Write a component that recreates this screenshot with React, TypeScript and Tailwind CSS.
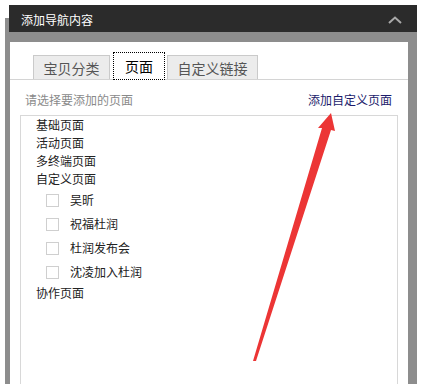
import React from "react";

const font = { fontFamily: '"Noto Sans CJK SC", "Liberation Sans", sans-serif' };

function Check({ label }: { label: string }) {
  return (
    <div className="h-[24px] flex items-center">
      <div className="ml-[10px] w-[13px] h-[13px] border border-[#cfcfcf] bg-white" />
      <span className="ml-[11px] text-[12px] leading-[16px] text-[#222]">{label}</span>
    </div>
  );
}

function Item({ label }: { label: string }) {
  return <div className="h-[18px] flex items-center text-[12px] leading-[16px] text-[#222]">{label}</div>;
}

export default function App() {
  return (
    <div className="relative w-[424px] h-[384px] bg-white overflow-hidden" style={font}>
      {/* header */}
      <div className="mt-[5px] ml-[5px] w-[412px] h-[27px] flex">
        <div className="w-[4px] flex flex-col">
          <div className="h-[13px] bg-white" />
          <div className="flex-1 bg-[#8d8d8d]" />
        </div>
        <div className="flex-1 bg-[#2b2b2b] flex items-center justify-between pl-[12px] pr-[15px]">
          <span className="text-[12px] leading-[16px] text-white mt-[3px]">添加导航内容</span>
          <svg width="14" height="8" viewBox="0 0 14 8" className="mt-[3px]">
            <path d="M1 7 L7 1.5 L13 7" fill="none" stroke="#a9a9a9" strokeWidth="2" />
          </svg>
        </div>
      </div>
      {/* body */}
      <div className="ml-[5px] w-[412px] h-[352px] bg-[#8d8d8d] pt-[10px] pl-[5px] pr-[9px]">
        <div className="bg-white h-full flex flex-col">
          {/* tabs */}
          <div className="h-[38px] border-b border-[#d4d4d4] flex items-end pl-[23px]">
            <div className="w-[77px] h-[24px] bg-[#ececec] border border-b-0 border-[#cacaca] flex items-center justify-center text-[14px] leading-[18px] text-[#555]">
              宝贝分类
            </div>
            <div className="ml-[3px] w-[52px] h-[28px] -mb-px bg-white border border-dotted border-black flex items-center justify-center text-[14px] leading-[18px] text-black">
              页面
            </div>
            <div className="ml-[2px] w-[91px] h-[24px] bg-[#ececec] border border-b-0 border-[#cacaca] flex items-center justify-center text-[14px] leading-[18px] text-[#555]">
              自定义链接
            </div>
          </div>
          {/* subtitle */}
          <div className="mt-[12px] h-[16px] flex items-center justify-between pl-[15px] pr-[16px]">
            <span className="text-[12px] leading-[16px] text-[#8a8a8a]">请选择要添加的页面</span>
            <span className="text-[12px] leading-[16px] text-[#1b1b6b]">添加自定义页面</span>
          </div>
          {/* list */}
          <div className="mt-[7px] ml-[10px] w-[378px] flex-1 border border-b-0 border-[#d8d8d8] pl-[15px]">
            <Item label="基础页面" />
            <Item label="活动页面" />
            <Item label="多终端页面" />
            <Item label="自定义页面" />
            <Check label="吴昕" />
            <Check label="祝福杜润" />
            <Check label="杜润发布会" />
            <Check label="沈凌加入杜润" />
            <Item label="协作页面" />
          </div>
        </div>
      </div>
      {/* annotation arrow */}
      <svg className="absolute left-0 top-0 pointer-events-none" width="424" height="384" viewBox="0 0 424 384">
        <polygon
          points="331,113 335,131 331,130 256,361 253,361 322,128 318,128"
          fill="#ec3535"
        />
      </svg>
    </div>
  );
}
